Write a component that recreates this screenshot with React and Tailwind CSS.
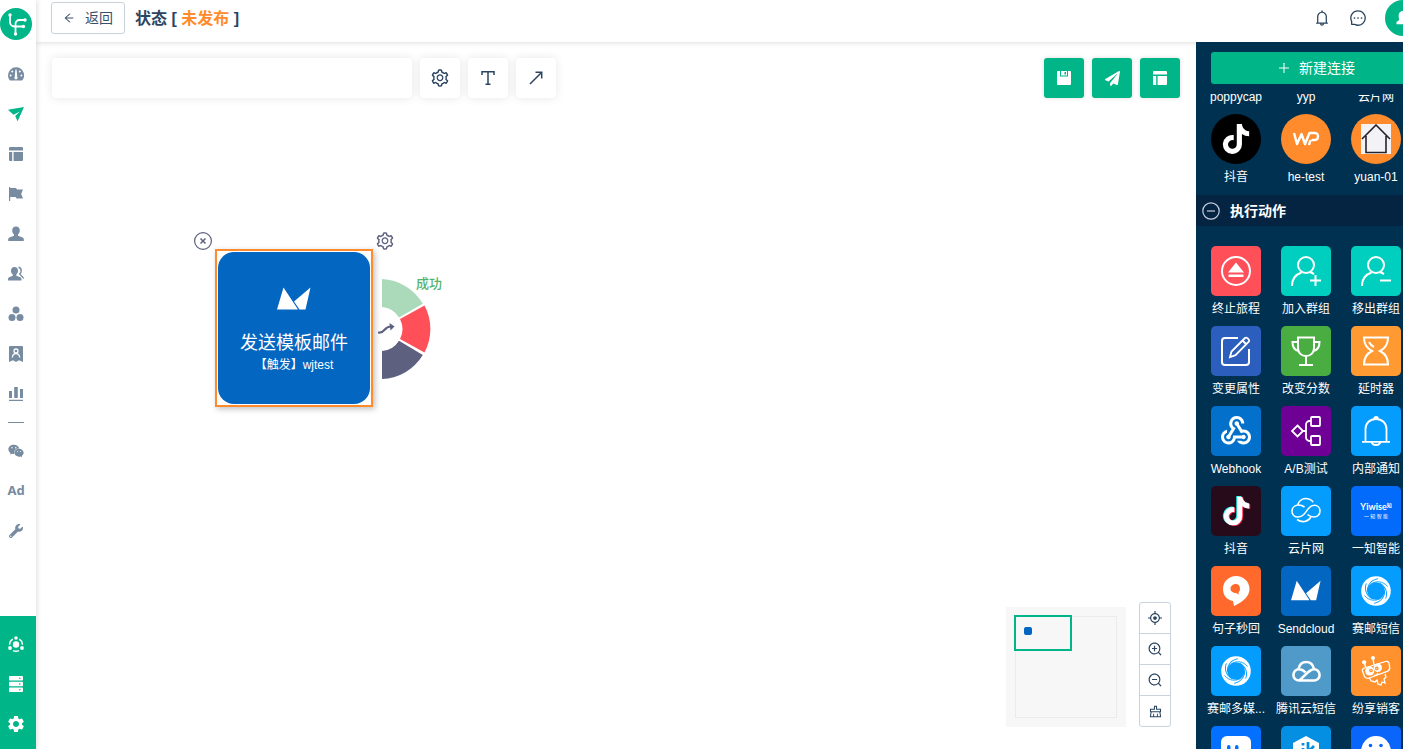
import {
  AiOutlineAim,
  AiOutlineArrowLeft,
  AiOutlineBell,
  AiOutlineClear,
  AiOutlineMessage,
  AiOutlinePlus,
  AiOutlineSetting,
  AiOutlineZoomIn,
  AiOutlineZoomOut,
} from 'react-icons/ai'
import { FaPaperPlane, FaTiktok, FaWeixin, FaWrench } from 'react-icons/fa'
import { MdSettings, MdWebhook } from 'react-icons/md'

const Svg16 = ({ children, size = 16 }) => (
  <svg width={size} height={size} viewBox="0 0 16 16" fill="currentColor">
    {children}
  </svg>
)

const Line30 = ({ children, width = 2 }) => (
  <svg width="30" height="30" viewBox="0 0 30 30" fill="none" stroke="currentColor" strokeWidth={width}>
    {children}
  </svg>
)

/* ---------- Sidebar icons ---------- */

const GaugeIcon = () => (
  <Svg16>
    <path d="M8 1.3a8 8 0 0 0-8 8c0 2 .7 3.8 1.9 5.2h12.2A8 8 0 0 0 8 1.3z" />
    <g fill="#fff">
      <circle cx="2.6" cy="9.6" r="1" />
      <circle cx="4.2" cy="5.6" r="1" />
      <circle cx="11.8" cy="5.6" r="1" />
      <circle cx="13.4" cy="9.6" r="1" />
      <path d="M7.4 3.4h1.2l.7 7.6a1.6 1.6 0 1 1-2.6 0z" />
    </g>
  </Svg16>
)

const PlaneIcon = () => (
  <Svg16>
    <path d="M0 3.800 16 1 9.600 15.300 7.200 10 12 5.500 5.500 8.800z" />
  </Svg16>
)

const LayoutIcon = ({ size }) => (
  <Svg16 size={size}>
    <path d="M2 1h12a1 1 0 0 1 1 1v2.5H1V2a1 1 0 0 1 1-1zM1 6h3.2v9H2a1 1 0 0 1-1-1zM5.6 6H15v8a1 1 0 0 1-1 1H5.6z" />
  </Svg16>
)

const FlagIcon = () => (
  <Svg16>
    <path d="M1 1h1.2v1H8l1 1.4h6L13.2 8l1.8 4.5H8.6l-1-1.5H2.2v4H1z" />
  </Svg16>
)

const UserIcon = () => (
  <Svg16>
    <path d="M8 .6c2.4 0 3.8 1.6 3.8 4 0 1.7-.7 3.2-1.8 4v1.2l4.6 1.6c.8.3 1.2.9 1.2 1.8V15H.2v-1.8c0-.9.4-1.5 1.2-1.8L6 9.800V8.600c-1.100-.8-1.800-2.300-1.800-4 0-2.400 1.400-4 3.800-4z" />
  </Svg16>
)

const UsersIcon = () => (
  <Svg16>
    <path d="M6.500 1c2.200 0 3.500 1.500 3.500 3.800 0 1.600-.7 3-1.700 3.700v1.200l4 1.600c.8.3 1.200.9 1.200 1.700v1.500H0V13c0-.8.4-1.400 1.100-1.700l3.700-1.600V8.500C3.700 7.800 3 6.400 3 4.800 3 2.500 4.300 1 6.500 1z" />
    <path d="M10.500 1.300c1.800.4 2.700 1.700 2.700 3.500 0 1.400-.6 2.600-1.500 3.200l4 4.400" fill="none" stroke="currentColor" strokeWidth="1.400" />
  </Svg16>
)

const CirclesIcon = () => (
  <Svg16>
    <circle cx="8" cy="4" r="3.500" />
    <circle cx="4" cy="11.500" r="3.500" />
    <circle cx="12" cy="11.500" r="3.500" />
  </Svg16>
)

const BadgeIcon = () => (
  <Svg16>
    <path d="M2 0h12a1 1 0 0 1 1 1v15l-4-1.800L8 16l-3-1.800L1 16V1a1 1 0 0 1 1-1z" />
    <g fill="none" stroke="#fff" strokeWidth="1.300">
      <circle cx="8" cy="5" r="2" />
      <path d="M4.300 11.500C4.600 9 6 7.600 8 7.600s3.400 1.400 3.700 3.900" />
    </g>
  </Svg16>
)

const BarsIcon = () => (
  <Svg16>
    <path d="M1 5h3v7H1zM6.200 1h3.600v11H6.200zM12 3h3v9h-3zM1 13.700h14V15H1z" />
  </Svg16>
)

const HubIcon = () => (
  <Svg16>
    <circle cx="8" cy="8.500" r="3.200" />
    <circle cx="8" cy="2" r="1.800" />
    <circle cx="2" cy="12" r="1.900" />
    <circle cx="14" cy="12" r="1.900" />
    <path d="M4.800 3.200A6.500 6.500 0 0 0 1.600 8.800M11.200 3.200a6.500 6.500 0 0 1 3.200 5.600M5 14.600a7 7 0 0 0 6 0" fill="none" stroke="currentColor" strokeWidth="1.400" />
  </Svg16>
)

const ServerIcon = () => (
  <Svg16>
    <rect x="1" y="0" width="14" height="4.600" rx=".8" />
    <rect x="1" y="5.700" width="14" height="4.600" rx=".8" />
    <rect x="1" y="11.400" width="14" height="4.600" rx=".8" />
    <g fill="#00b587">
      <circle cx="11.800" cy="2.300" r=".8" />
      <circle cx="11.800" cy="8" r=".8" />
      <circle cx="11.800" cy="13.700" r=".8" />
    </g>
  </Svg16>
)

const Logo = () => (
  <svg width="32" height="32" viewBox="0 0 32 32" fill="none">
    <circle cx="16" cy="16" r="16" fill="#00b587" />
    <g stroke="#fff" strokeWidth="1.800">
      <path d="M10 7v7a4.500 4.500 0 0 0 4.500 4.500H23M26 12h-6.500a4 4 0 0 0-4 4v10" />
    </g>
    <g fill="#fff">
      <circle cx="10" cy="7" r="1.700" />
      <circle cx="23.500" cy="18.500" r="1.700" />
      <circle cx="25" cy="12" r="1.700" />
      <circle cx="15.500" cy="26" r="1.700" />
    </g>
  </svg>
)

/* ---------- Toolbar icons ---------- */

const SaveIcon = () => (
  <Svg16 size={16}>
    <path fillRule="evenodd" d="M2 1h2v5.500h8V1h2a1 1 0 0 1 1 1v12a1 1 0 0 1-1 1H2a1 1 0 0 1-1-1V2a1 1 0 0 1 1-1zM5 1h6v4.500H5zm3.500 1v2.500H10V2z" />
  </Svg16>
)

const TextIcon = () => (
  <svg width="16" height="16" viewBox="0 0 16 16" fill="none" stroke="currentColor" strokeWidth="1.500">
    <path d="M2 5V1.800h12V5M8 1.800v12.400M5.500 14.200h5" />
  </svg>
)

const ArrowIcon = () => (
  <svg width="16" height="16" viewBox="0 0 16 16" fill="none" stroke="currentColor" strokeWidth="1.500">
    <path d="M2 14 13.500 2.500M7.500 2.300h6.200v6.200" />
  </svg>
)

/* ---------- Action icons ---------- */

const StopIcon = () => (
  <Line30>
    <circle cx="15" cy="15" r="14" />
    <path d="M15 6.500 23 16.500H7zM7.500 18.500h15v2.500h-15z" fill="currentColor" stroke="none" />
  </Line30>
)

const MemberIcon = ({ remove }) => (
  <Line30>
    <circle cx="15" cy="9" r="8" />
    <path d="M1 30c0-7 3.500-11.500 9.500-13.500M19 16l4 2" />
    <path d={remove ? 'M19 24.500h11' : 'M19 24.500h11M24.500 19v11'} />
  </Line30>
)

const EditIcon = () => (
  <Line30>
    <path d="M17 2H4a3 3 0 0 0-3 3v21a3 3 0 0 0 3 3h21a3 3 0 0 0 3-3V13" />
    <path d="m9 21 1.500-5.500L24 2c1.500-1.400 5.200 2 3.800 3.700L14.500 19.200zM21.500 4.500l4 4" strokeWidth="1.800" />
  </Line30>
)

const TrophyIcon = () => (
  <Line30>
    <path d="M7 1.500h16V12c0 5-3.500 8-8 8s-8-3-8-8zM7 6H1.500c0 5 1.500 8 6 9M23 6h5.500c0 5-1.500 8-6 9M15 20v9M8 29h14" />
  </Line30>
)

const HourglassIcon = () => (
  <Line30>
    <path d="M3 1.500h24C27 8 24 12.500 19 15c5 2.500 8 7 8 13.500H3C3 22 6 17.500 11 15 6 12.500 3 8 3 1.500z" />
    <path d="M8 6c1 2 2.500 3.800 5 5" />
  </Line30>
)

const SplitIcon = () => (
  <Line30 width={1.8}>
    <path d="m6.500 9.500 5.500 5.500-5.500 5.500L1 15zM12 15h3M20 5h-1.500A3.500 3.500 0 0 0 15 8.500v13a3.500 3.500 0 0 0 3.500 3.500H20" />
    <rect x="20" y="1" width="9" height="9" rx="1" />
    <rect x="20" y="20" width="9" height="9" rx="1" />
  </Line30>
)

const BellIcon = () => (
  <Line30 width={1.8}>
    <path d="M4.500 25.500V13C4.500 7 9 3 15 3s10.500 4 10.500 10v12.500M1 25.800h28M13 3a2 2 0 0 1 4 0M10.500 26c1 4 8 4 9 0" />
  </Line30>
)

const DouyinIcon = () => (
  <svg width="30" height="30" viewBox="0 0 30 30">
    <FaTiktok x="0" y="0" size={29} color="#25f4ee" />
    <FaTiktok x="2" y="1" size={29} color="#fe2c55" />
    <FaTiktok x="1" y=".5" size={29} color="#fff" />
  </svg>
)

const YunpianIcon = () => (
  <Line30 width={1.6}>
    <path d="M13.500 11C11.500 9.500 9.500 8.800 7 9c-3.500.3-6 3-6 6.200C1 18.500 3.500 21 7 21c6.500 0 7.500-5.500 11-9 1.500-1.800 3.200-2.700 5.500-2.700 3.200 0 5.500 2.500 5.500 5.700S26.500 21 23 21c-2.500 0-4.500-.8-6.500-2.500" />
    <path d="M6.500 9C8 4 13 1 18.500 3.200c1.500.5 3 1.500 3.500 3M6 23.500c5 3.500 11 2.500 14-2.500" />
  </Line30>
)

const YiwiseIcon = () => (
  <span className="flex flex-col items-center font-['Lato','Noto_Sans_CJK_SC',sans-serif] text-white">
    <span className="flex items-start text-[9px] leading-[10px] font-bold">
      Yiwise<span className="text-[5px] leading-[6px]">知</span>
    </span>
    <span className="text-[5px] leading-2">一 知 智 能</span>
  </span>
)

const BubbleIcon = () => (
  <svg width="30" height="30" viewBox="0 0 30 30" fill="currentColor">
    <path fillRule="evenodd" d="M15 0C22.500 0 28.500 5.500 28.500 13c0 7-6 12.500-15.500 17l-1-5C6 24 2 19.500 2 13 2 5.500 8 0 15 0zm0 8c-3.500 0-5.500 2.200-5.500 4.800 0 2.700 2.500 4.200 5.500 4.200l3 1.500-.5-2.300c1.200-.9 1.500-2 1.500-3.400C19 10 17.500 8 15 8z" />
  </svg>
)

const SendcloudIcon = ({ className }) => (
  <svg width="34" height="24" viewBox="0 0 34 24" fill="currentColor" className={className}>
    <path d="M0 22.500 6.500.5 21 22.500zM17 14.500 33.500.5 28.500 22.500h-6z" />
  </svg>
)

const SwirlIcon = () => (
  <svg width="30" height="30" viewBox="0 0 30 30" fill="none">
    <circle cx="15" cy="15" r="11.800" stroke="#fff" strokeWidth="6" />
    {[0, 60, 120, 180, 240, 300].map((a) => (
      <path key={a} d="M10 8c5-3.500 12-3 16.500 2.500" transform={`rotate(${a} 15 15)`} stroke="#049dfd" strokeWidth=".9" />
    ))}
  </svg>
)

const TencentIcon = () => (
  <Line30 width={2.600}>
    <path d="M8 24.500h15A5.600 5.600 0 0 0 23 13.300c-5 0-9 6.700-15 11.200a5.600 5.600 0 0 1 0-11.200c2.500 0 4.500 1 6.500 3M7.500 13C8.500 8 11.500 6 15.200 6S22 8.500 23 13" />
  </Line30>
)

const RobotIcon = () => (
  <Line30 width={1.300}>
    <path d="M3.500 12 24.500 5.500c2-.6 3.300.3 3.600 2l.6 4c.2 1.800-.6 3-2.500 3.800L8 22c-2.300.8-4 0-4.700-2L1.500 15c-.4-1.500.3-2.500 2-3zM4.500 11 3.500 7M13 8.500 12 3M8.500 22l1.500 3 4 1 2-2 1 4 3 1 1-3 3 1-1-4 2-2-1-3" />
    <circle cx="3.200" cy="6.300" r="1.500" fill="currentColor" />
    <circle cx="12" cy="2" r="1.300" fill="currentColor" />
    <circle cx="8.700" cy="15" r="4.600" fill="currentColor" stroke="none" />
    <circle cx="16.800" cy="11.800" r="4.200" fill="currentColor" stroke="none" />
    <circle cx="10" cy="14.500" r="1.200" stroke="#ff922e" />
    <circle cx="15.800" cy="12.300" r="1.200" stroke="#ff922e" />
    <path d="M13 19c2 1 3 0 4-2" />
  </Line30>
)

const FaceIcon = () => (
  <svg width="30" height="30" viewBox="0 0 30 30">
    <rect width="30" height="28" rx="6" fill="#fff" />
    <rect x="6" y="9" width="3.500" height="7" rx="1.700" fill="#0470ff" />
    <rect x="14" y="9" width="3.500" height="7" rx="1.700" fill="#0470ff" />
  </svg>
)

const HexIcon = () => (
  <svg width="30" height="30" viewBox="0 0 30 30">
    <path d="M15 0 28 7v16l-13 7L2 23V7z" fill="#fff" />
    <g fill="none" stroke="#048fe2" strokeWidth="2.800">
      <path d="M12 12v10M17 6v16M23 10l-5 5 5 6" />
      <path d="M12 7v2.500" />
    </g>
  </svg>
)

const SmileIcon = () => (
  <svg width="30" height="30" viewBox="0 0 30 30">
    <circle cx="15" cy="15" r="15" fill="#fff" />
    <circle cx="9.500" cy="9.500" r="1.800" fill="#0a66fb" />
    <circle cx="20" cy="9.500" r="1.800" fill="#0a66fb" />
    <path d="M6 17c4 7 14 7 18 0" fill="none" stroke="#0a66fb" strokeWidth="2" />
  </svg>
)

const WpIcon = () => (
  <svg width="28" height="16" viewBox="0 0 28 16" fill="none" stroke="#fff" strokeWidth="2.400">
    <path d="M2 2 5 13 9.500 3 13 13 17.500 2H23c4.500 0 3.500 7 0 7h-3.500M18.500 9 17 14" strokeLinejoin="round" />
  </svg>
)

const HouseIcon = () => (
  <svg width="30" height="30" viewBox="0 0 30 30" fill="none">
    <rect width="30" height="30" fill="#f3f3f5" />
    <path d="M1 15 15 1l14 14M5 12v16.500h20V12" stroke="#26222c" strokeWidth="1.600" />
  </svg>
)

/* ---------- Data ---------- */

const navItems = [
  { key: 'dashboard', icon: <GaugeIcon /> },
  { key: 'journeys', icon: <PlaneIcon />, active: true },
  { key: 'pages', icon: <LayoutIcon size={16} /> },
  { key: 'campaigns', icon: <FlagIcon /> },
  { key: 'contacts', icon: <UserIcon /> },
  { key: 'groups', icon: <UsersIcon /> },
  { key: 'segments', icon: <CirclesIcon /> },
  { key: 'members', icon: <BadgeIcon /> },
  { key: 'reports', icon: <BarsIcon /> },
]

const channelItems = [
  { key: 'wechat', icon: <FaWeixin size={16} /> },
  { key: 'ads', icon: <span className="font-['Noto_Sans',sans-serif] text-[13px] font-bold">Ad</span> },
  { key: 'tools', icon: <FaWrench size={14} /> },
]

const systemItems = [
  { key: 'hub', icon: <HubIcon /> },
  { key: 'data', icon: <ServerIcon /> },
  { key: 'settings', icon: <MdSettings size={20} /> },
]

const connections = [
  { name: '抖音', color: 'bg-black', icon: <FaTiktok size={30} /> },
  { name: 'he-test', color: 'bg-[#ff8b2c]', icon: <WpIcon /> },
  { name: 'yuan-01', color: 'bg-[#ff8b2c]', icon: <HouseIcon /> },
]

const actions = [
  { name: '终止旅程', color: 'bg-[#ff4f59]', icon: <StopIcon /> },
  { name: '加入群组', color: 'bg-[#00cebe]', icon: <MemberIcon /> },
  { name: '移出群组', color: 'bg-[#00cebe]', icon: <MemberIcon remove /> },
  { name: '变更属性', color: 'bg-[#2c5fbd]', icon: <EditIcon /> },
  { name: '改变分数', color: 'bg-[#4aad41]', icon: <TrophyIcon /> },
  { name: '延时器', color: 'bg-[#ff9a33]', icon: <HourglassIcon /> },
  { name: 'Webhook', color: 'bg-[#0371cb]', icon: <MdWebhook size={36} /> },
  { name: 'A/B测试', color: 'bg-[#6f0096]', icon: <SplitIcon /> },
  { name: '内部通知', color: 'bg-[#049dfd]', icon: <BellIcon /> },
  { name: '抖音', color: 'bg-[#270b1b]', icon: <DouyinIcon /> },
  { name: '云片网', color: 'bg-[#049dfd]', icon: <YunpianIcon /> },
  { name: '一知智能', color: 'bg-[#036bfb]', icon: <YiwiseIcon /> },
  { name: '句子秒回', color: 'bg-[#ff6a2c]', icon: <BubbleIcon /> },
  { name: 'Sendcloud', color: 'bg-[#0366c1]', icon: <SendcloudIcon className="w-[30px]" /> },
  { name: '赛邮短信', color: 'bg-[#049dfd]', icon: <SwirlIcon /> },
  { name: '赛邮多媒...', color: 'bg-[#049dfd]', icon: <SwirlIcon /> },
  { name: '腾讯云短信', color: 'bg-[#4f9ac8]', icon: <TencentIcon /> },
  { name: '纷享销客', color: 'bg-[#ff922e]', icon: <RobotIcon /> },
  { name: '', color: 'bg-[#0470ff]', icon: <FaceIcon /> },
  { name: '', color: 'bg-[#048fe2]', icon: <HexIcon /> },
  { name: '', color: 'bg-[#0a66fb]', icon: <SmileIcon /> },
]

/* ---------- Layout ---------- */

function NavLink({ icon, active, light }) {
  return (
    <a
      href="#"
      className={`flex h-10 w-8 items-center justify-center ${
        light ? 'text-white' : active ? 'text-[#00b587]' : 'text-[#778ba1]'
      }`}
    >
      {icon}
    </a>
  )
}

function Sidebar() {
  return (
    <aside className="relative z-20 flex w-9 shrink-0 flex-col bg-white shadow-[0_0_6px_rgba(0,0,0,0.18)]">
      <a href="#" className="mt-2 mb-[14px]">
        <Logo />
      </a>
      <nav>
        {navItems.map((item) => (
          <NavLink key={item.key} icon={item.icon} active={item.active} />
        ))}
        <hr className="mt-2 mb-2 ml-2 w-4 border-[#778ba1]" />
        {channelItems.map((item) => (
          <NavLink key={item.key} icon={item.icon} />
        ))}
      </nav>
      <nav className="mt-auto bg-[#00b587] pt-2 pb-[5px]">
        {systemItems.map((item) => (
          <NavLink key={item.key} icon={item.icon} light />
        ))}
      </nav>
    </aside>
  )
}

function Header() {
  return (
    <header className="relative z-10 h-[42px] shrink-0 bg-white shadow-[0_0_6px_rgba(0,0,0,0.18)]">
      <div className="flex h-full items-start overflow-hidden pl-[15px]">
        <button
          type="button"
          className="mt-[2px] flex h-8 w-[74px] items-center justify-center gap-[10px] rounded-[3px] border border-[#c8d1da] text-sm text-[#3a5068]"
        >
          <AiOutlineArrowLeft size={12} />
          返回
        </button>
        <h1 className="ml-[10px] pt-[7px] text-base leading-6 font-bold text-[#2b4560]">
          状态 [ <span className="text-[#ff8b2c]">未发布</span> ]
        </h1>
        <div className="ml-auto flex items-center text-[#2b4560]">
          <button type="button" aria-label="通知" className="flex h-9 w-9 items-center justify-center">
            <AiOutlineBell size={18} />
          </button>
          <button type="button" aria-label="消息" className="flex h-9 w-9 items-center justify-center">
            <AiOutlineMessage size={18} />
          </button>
          <button
            type="button"
            aria-label="账户"
            className="-mr-[18px] ml-[9px] flex size-9 items-center justify-center rounded-full bg-[#00b587] text-white"
          >
            <Svg16 size={14}>
              <path d="M8 0c3 0 4.500 2 4.500 5S11 9.500 10.500 10l5 2.500V15H.5v-2.500L4 10C3.500 9.500 3 8 3 5s2-5 5-5z" />
            </Svg16>
          </button>
        </div>
      </div>
    </header>
  )
}

function Toolbar() {
  const plain =
    'flex size-10 items-center justify-center rounded-sm bg-white text-[#2b4560] shadow-[0_0_10px_rgba(0,0,0,0.1)]'
  const solid =
    'flex size-10 items-center justify-center rounded-[3px] bg-[#00b587] text-white shadow-[0_0_4px_rgba(0,0,0,0.15)]'
  return (
    <div className="flex gap-2 p-4">
      <input
        type="text"
        aria-label="旅程名称"
        className="h-10 w-[360px] rounded-sm bg-white px-3 text-sm shadow-[0_0_10px_rgba(0,0,0,0.1)] outline-none"
      />
      <button type="button" aria-label="设置" className={plain}>
        <AiOutlineSetting size={20} />
      </button>
      <button type="button" aria-label="文本" className={plain}>
        <TextIcon />
      </button>
      <button type="button" aria-label="箭头" className={plain}>
        <ArrowIcon />
      </button>
      <div className="ml-auto flex gap-2">
        <button type="button" aria-label="保存" className={solid}>
          <SaveIcon />
        </button>
        <button type="button" aria-label="发布" className={solid}>
          <FaPaperPlane size={15} />
        </button>
        <button type="button" aria-label="布局" className={solid}>
          <LayoutIcon size={16} />
        </button>
      </div>
    </div>
  )
}

function JourneyNode() {
  return (
    <div className="absolute top-[207px] left-[179px]">
      <div className="size-[158px] border-2 border-[#ff8b2c] p-px shadow-[2px_2px_6px_rgba(0,0,0,0.25)]">
        <div className="flex h-full flex-col items-center rounded-2xl bg-[#0366c1] pt-[35px] text-white">
          <SendcloudIcon />
          <p className="mt-[18px] text-lg leading-7">发送模板邮件</p>
          <p className="text-xs leading-4">【触发】wjtest</p>
        </div>
      </div>

      <button type="button" aria-label="删除" className="absolute -top-[17px] -left-[21px] text-[#5d607f]">
        <svg width="18" height="18" viewBox="0 0 18 18" fill="none" stroke="currentColor">
          <circle cx="9" cy="9" r="8.400" strokeWidth="1.200" />
          <path d="m6.500 6.500 5 5m0-5-5 5" strokeWidth="1.500" />
        </svg>
      </button>
      <button type="button" aria-label="节点设置" className="absolute -top-[18px] left-[160px] text-[#5d607f]">
        <AiOutlineSetting size={20} />
      </button>

      {/* Result branches */}
      <svg width="54" height="100" viewBox="0 0 54 100" className="absolute top-[30px] left-[163px]">
        <path d="M4 0A50 50 0 0 1 44.800 24.800L21 38.500A22 22 0 0 0 4 28z" fill="#aadaba" />
        <path d="M46.500 26.500a50 50 0 0 1 0 47L22 60a22 22 0 0 0 0-20z" fill="#ff4f59" />
        <path d="M44.800 76A50 50 0 0 1 4 100V72a22 22 0 0 0 17-10.300z" fill="#5d607f" />
        <path d="M0 53.500c7 1.500 6-6.500 13-6" fill="none" stroke="#5d607f" strokeWidth="2.200" />
        <path d="m11.500 44 5 3.500-4 4z" fill="#5d607f" />
      </svg>
      <span className="absolute top-[25px] left-[201px] text-[13px] leading-5 font-medium whitespace-nowrap text-[#56b26d]">
        成功
      </span>
    </div>
  )
}

function MiniMap() {
  return (
    <div className="h-[120px] w-[120px] bg-[#f7f7f7] p-[9px]">
      <div className="relative h-full border border-[#ebebeb]">
        <div className="absolute -top-[2px] -left-[2px] h-9 w-[58px] border-2 border-[#00b587]" />
        <div className="absolute top-[10px] left-2 size-2 rounded-xs bg-[#0366c1]" />
      </div>
    </div>
  )
}

const zoomTools = [
  { label: '定位', icon: <AiOutlineAim size={16} /> },
  { label: '放大', icon: <AiOutlineZoomIn size={16} /> },
  { label: '缩小', icon: <AiOutlineZoomOut size={16} /> },
  { label: '清理', icon: <AiOutlineClear size={15} /> },
]

function Canvas() {
  return (
    <main className="relative min-w-0 flex-1 bg-white">
      <Toolbar />
      <JourneyNode />
      <div className="absolute right-[25px] bottom-[22px] flex items-end gap-[13px]">
        <MiniMap />
        <div className="divide-y divide-[#c8d3de] rounded-[3px] border border-[#c8d3de]">
          {zoomTools.map((tool) => (
            <button
              key={tool.label}
              type="button"
              aria-label={tool.label}
              className="flex h-[31px] w-[30px] items-center justify-center text-[#2b4560] last:h-[30px]"
            >
              {tool.icon}
            </button>
          ))}
        </div>
      </div>
    </main>
  )
}

function ItemGrid({ items, shape }) {
  return (
    <ul className="grid grid-cols-[70px_70px_70px] gap-y-[10px] pl-[5px] text-center text-xs text-white">
      {items.map((item, i) => (
        <li key={i} className="flex h-[70px] flex-col items-center gap-[3px]">
          <div className={`flex size-[50px] shrink-0 items-center justify-center ${shape} ${item.color}`}>
            {item.icon}
          </div>
          <span className="leading-5 whitespace-nowrap">{item.name}</span>
        </li>
      ))}
    </ul>
  )
}

function Panel() {
  return (
    <aside className="relative z-10 w-[207px] shrink-0 overflow-hidden bg-[#003150]">
      <div className="flex h-full w-[240px] flex-col">
        <div className="px-[15px] py-[10px]">
          <button
            type="button"
            className="flex h-8 w-full items-center justify-center gap-2 rounded-[3px] bg-[#00b587] text-sm text-white"
          >
            <AiOutlinePlus size={14} />
            新建连接
          </button>
        </div>
        <div className="min-h-0 flex-1 overflow-hidden">
          <div className="-mt-[7px] mb-[7px] grid grid-cols-[70px_70px_70px] pl-[5px] text-center text-xs leading-5 text-white">
            <span>poppycap</span>
            <span>yyp</span>
            <span>云片网</span>
          </div>
          <ItemGrid items={connections} shape="rounded-full" />
          <h2 className="mt-[11px] mb-5 flex h-[31px] items-center gap-[10px] bg-[#052441] pl-[6px] text-sm font-bold text-white">
            <svg width="18" height="18" viewBox="0 0 18 18" fill="none" stroke="#c5cfe0" strokeWidth="1.200">
              <circle cx="9" cy="9" r="8.200" />
              <path d="M5 9h8" />
            </svg>
            执行动作
          </h2>
          <ItemGrid items={actions} shape="rounded-[5px]" />
        </div>
      </div>
    </aside>
  )
}

export default function App() {
  return (
    <div className="flex h-screen overflow-hidden bg-white font-['Liberation_Sans','Noto_Sans_CJK_SC',sans-serif]">
      <Sidebar />
      <div className="flex min-w-0 flex-1 flex-col">
        <Header />
        <div className="flex min-h-0 flex-1">
          <Canvas />
          <Panel />
        </div>
      </div>
    </div>
  )
}
